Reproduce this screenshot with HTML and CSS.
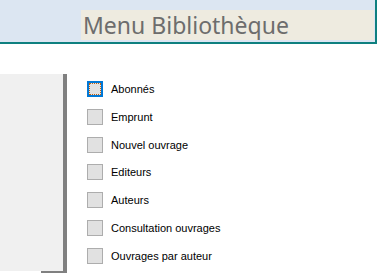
FILE: index.html
```html
<!DOCTYPE html>
<html lang="fr">
<head>
    <meta charset="UTF-8">
    <meta name="viewport" content="width=device-width, initial-scale=1.0">
    <title>Menu Bibliothèque</title>
    <link rel="stylesheet" href="styles.css">
</head>
<body>
    <div class="header">
        <div class="title">Menu Bibliothèque</div>
    </div>
    <div class="main">
        <div class="side">
            <div class="panel"></div>
            <div class="panel-foot"></div>
        </div>
        <div class="bar"></div>
        <ul class="menu">
            <li><span class="box focus"><span></span></span>Abonnés</li>
            <li><span class="box"></span>Emprunt</li>
            <li><span class="box"></span>Nouvel ouvrage</li>
            <li><span class="box"></span>Editeurs</li>
            <li><span class="box"></span>Auteurs</li>
            <li><span class="box"></span>Consultation ouvrages</li>
            <li><span class="box"></span>Ouvrages par auteur</li>
        </ul>
    </div>
</body>
</html>
```

FILE: styles.css
```css
body {
    margin: 0;
    background: white;
    font-family: "Liberation Sans", Arial, sans-serif;
    overflow: hidden;
}

.header {
    width: 294px;
    height: 32px;
    padding: 10px 0 0 81px;
    background-color: #dce6f2;
    border-right: 2px solid #0e8080;
    border-bottom: 2px solid #0e8080;
}

.title {
    height: 30px;
    width: 293px;
    background-color: #eeebe0;
    color: #6d6d6d;
    font-family: "Noto Sans", sans-serif;
    font-size: 23px;
    line-height: 31px;
    padding-left: 2px;
    box-sizing: border-box;
    white-space: nowrap;
}

.main {
    display: flex;
    margin-top: 30px;
}

.side {
    width: 63px;
}

.panel {
    height: 197px;
    background-color: #f0f0f0;
}

.panel-foot {
    height: 3px;
    margin-left: 41px;
    background-color: #808080;
}

.bar {
    width: 4px;
    height: 200px;
    background-color: #808080;
}

.menu {
    list-style: none;
    margin: 7px 0 0 20px;
    padding: 0;
    display: flex;
    flex-direction: column;
    gap: 11.8px;
}

.menu li {
    display: flex;
    align-items: center;
    height: 16px;
    font-size: 11px;
    color: black;
}

.box {
    width: 14px;
    height: 14px;
    margin-right: 8px;
    background-color: #e1e1e1;
    border: 1px solid #adadad;
    flex-shrink: 0;
}

.box.focus {
    width: 12px;
    height: 12px;
    border: 2px solid #0078d7;
    display: flex;
    align-items: center;
    justify-content: center;
}

.box.focus span {
    width: 10px;
    height: 10px;
    border: 1px dotted #c06010;
}
```
